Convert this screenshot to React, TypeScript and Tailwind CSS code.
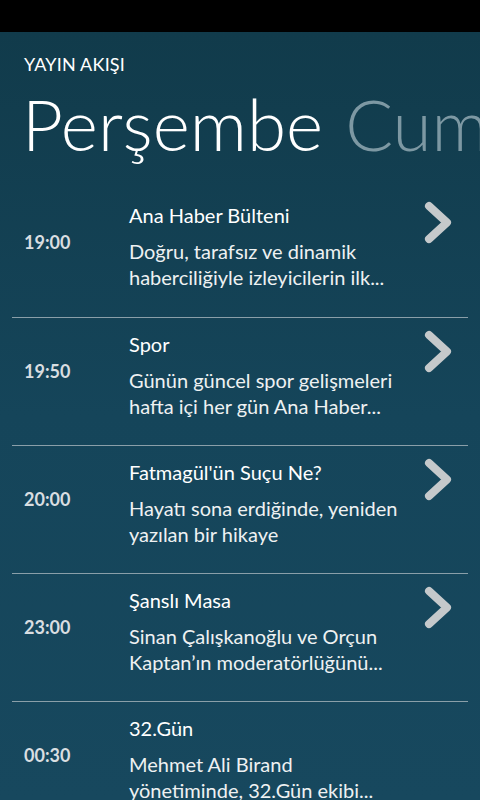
const shows = [
  {
    time: "19:00",
    title: "Ana Haber Bülteni",
    desc: ["Doğru, tarafsız ve dinamik", "haberciliğiyle izleyicilerin ilk..."],
    more: true,
  },
  {
    time: "19:50",
    title: "Spor",
    desc: ["Günün güncel spor gelişmeleri", "hafta içi her gün Ana Haber..."],
    more: true,
  },
  {
    time: "20:00",
    title: "Fatmagül'ün Suçu Ne?",
    desc: ["Hayatı sona erdiğinde, yeniden", "yazılan bir hikaye"],
    more: true,
  },
  {
    time: "23:00",
    title: "Şanslı Masa",
    desc: ["Sinan Çalışkanoğlu ve Orçun", "Kaptan’ın moderatörlüğünü..."],
    more: true,
  },
  {
    time: "00:30",
    title: "32.Gün",
    desc: ["Mehmet Ali Birand", "yönetiminde, 32.Gün ekibi..."],
    more: false,
  },
];

function Chevron() {
  return (
    <svg width="34" height="49" viewBox="0 0 34 49" className="text-[#c5c9cb]">
      <polyline
        points="8,8 26,24.5 8,41"
        fill="none"
        stroke="currentColor"
        strokeWidth="8"
        strokeLinecap="round"
        strokeLinejoin="round"
      />
    </svg>
  );
}

export default function App() {
  return (
    <div
      className="w-[480px] h-[800px] overflow-hidden flex flex-col bg-black text-white"
      style={{ fontFamily: "Lato, 'Open Sans', sans-serif" }}
    >
      {/* status bar */}
      <div className="h-8 shrink-0 bg-black" />

      <div className="flex-1 overflow-hidden bg-linear-to-b from-[#113b4b] via-[#15455a] to-[#17485e]">
        {/* Header */}
        <div className="pl-6 pt-[21px] text-[18px] leading-[22px] tracking-[0.2px]">
          YAYIN AKIŞI
        </div>
        <div className="flex whitespace-nowrap pl-[22px] mt-[6px] text-[71px] leading-[86px] font-light">
          <span>Perşembe</span>
          <span className="ml-[22px] text-[#7d98a3]">Cum</span>
        </div>

        {/* Schedule */}
        <div className="px-3 mt-[22px]">
          {shows.map((show, i) => (
            <div
              key={i}
              className={`flex h-[128px] ${i > 0 ? "border-t border-[#8a9fa9]" : ""}`}
            >
              <div className="w-[117px] shrink-0 pl-3 pt-[40px] text-[18px] leading-[26px] font-bold text-[#d9dee1]">
                {show.time}
              </div>
              <div className="flex-1 pt-[13px]">
                <div className="text-[20px] leading-[26px]">{show.title}</div>
                <div className="mt-[10px] text-[20px] leading-[26px] text-[#eef1f2]">
                  {show.desc.map((line, j) => (
                    <div key={j} className="whitespace-nowrap">
                      {line}
                    </div>
                  ))}
                </div>
              </div>
              <div className="w-[52px] shrink-0 pt-[9px] pl-[5px]">
                {show.more && <Chevron />}
              </div>
            </div>
          ))}
        </div>
      </div>
    </div>
  );
}
